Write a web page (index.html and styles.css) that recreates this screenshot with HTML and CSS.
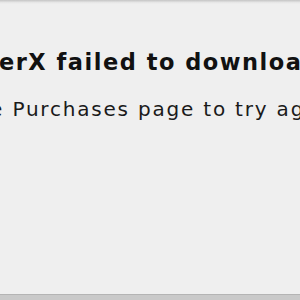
FILE: index.html
```html
<!DOCTYPE html>
<html>
<head>
<meta charset="utf-8">
<link rel="stylesheet" href="styles.css">
</head>
<body>
<div class="dialog">
  <div class="topedge"></div>
  <div class="content">
    <p class="title">erX failed to download</p>
    <p class="message">the Purchases page to try again.</p>
  </div>
  <div class="bottomedge"></div>
</div>
</body>
</html>
```
FILE: styles.css
```css
html, body {
  margin: 0;
  padding: 0;
  width: 300px;
  height: 300px;
  overflow: hidden;
  background: #efefef;
}
.dialog {
  display: flex;
  flex-direction: column;
  width: 300px;
  height: 300px;
}
.topedge {
  height: 4px;
  background: linear-gradient(#c4c4c4, #e6e6e6 60%, #efefef);
}
.content {
  flex: 1;
  overflow: hidden;
  padding-top: 45px;
}
.title {
  margin: 0 0 0 -1px;
  white-space: nowrap;
  font-family: "DejaVu Sans", sans-serif;
  font-weight: bold;
  font-size: 22.5px;
  letter-spacing: 1.5px;
  line-height: 26px;
  color: #111;
}
.message {
  margin: 22px 0 0 -34px;
  white-space: nowrap;
  font-family: "DejaVu Sans", sans-serif;
  font-size: 20px;
  letter-spacing: 1.8px;
  line-height: 24px;
  color: #1a1a1a;
}
.bottomedge {
  height: 5px;
  border-top: 1px solid #b4b4b4;
  background: #c9c9c9;
}
```
